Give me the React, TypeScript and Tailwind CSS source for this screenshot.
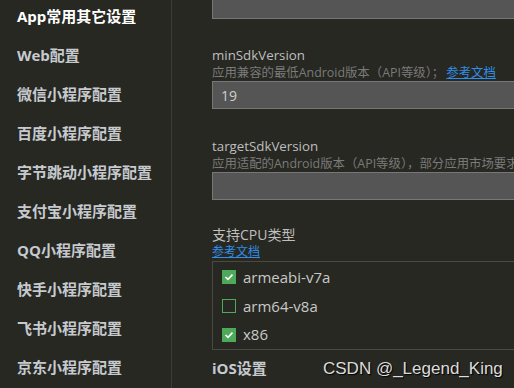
import React from "react";

const cjk = '"Segoe UI", "Open Sans", "Noto Sans CJK SC", sans-serif';

const items = [
  "App常用其它设置",
  "Web配置",
  "微信小程序配置",
  "百度小程序配置",
  "字节跳动小程序配置",
  "支付宝小程序配置",
  "QQ小程序配置",
  "快手小程序配置",
  "飞书小程序配置",
  "京东小程序配置",
];

function Check({ checked }: { checked: boolean }) {
  return checked ? (
    <div className="w-[14px] h-[14px] bg-[#4ea95a] flex items-center justify-center">
      <svg width="10" height="8" viewBox="0 0 10 8">
        <path d="M1.5 4 L4 6.3 L8.5 1.6" fill="none" stroke="#ffffff" strokeWidth="1.6" />
      </svg>
    </div>
  ) : (
    <div className="w-[14px] h-[14px] border border-[#4ea95a]" />
  );
}

export default function App() {
  return (
    <div
      className="w-[514px] h-[388px] bg-[#272822] flex overflow-hidden relative"
      style={{ fontFamily: cjk }}
    >
      <div className="w-[172px] shrink-0 border-r border-[#3c3c37] flex flex-col -mt-[3px]">
        {items.map((t, i) => (
          <div
            key={t}
            className={`h-[39px] shrink-0 flex items-center pl-[17px] text-[15px] font-bold ${
              i === 0 ? "text-white" : "text-[#c6cacf]"
            }`}
          >
            {t}
          </div>
        ))}
      </div>
      <div className="flex-1 overflow-hidden pl-[40px] flex flex-col">
        <div className="w-[330px] h-[29px] -mt-[10px] shrink-0 bg-[#555555] border border-[#777777]" />
        <div className="mt-[26px] h-[20px] leading-[20px] text-[13.3px] text-[#bfbfbf] whitespace-nowrap">
          minSdkVersion
        </div>
        <div className="h-[16px] leading-[16px] text-[12.4px] text-[#7a7a7a] whitespace-nowrap">
          应用兼容的最低Android版本（API等级）；
          <span className="ml-[2px] text-[#2f8ee8] underline">参考文档</span>
        </div>
        <div className="w-[330px] h-[28px] shrink-0 bg-[#555555] border border-[#777777] flex items-center pl-[8px] text-[14px] text-[#cfcfcf]">
          19
        </div>
        <div className="mt-[27px] h-[20px] leading-[20px] text-[13.3px] text-[#bfbfbf] whitespace-nowrap">
          targetSdkVersion
        </div>
        <div className="h-[16px] leading-[16px] text-[12.4px] text-[#7a7a7a] whitespace-nowrap">
          应用适配的Android版本（API等级），部分应用市场要求设置为较高的版本
        </div>
        <div className="w-[330px] h-[28px] shrink-0 bg-[#555555] border border-[#777777]" />
        <div className="mt-[26px] h-[18px] leading-[18px] text-[14px] text-[#bfbfbf] whitespace-nowrap">
          支持CPU类型
        </div>
        <div className="h-[17px] leading-[16px] text-[12px] text-[#2f8ee8] underline whitespace-nowrap">
          参考文档
        </div>
        <div className="w-[330px] h-[89px] shrink-0 border border-[#4a4a45] pt-[1px] flex flex-col">
          {[
            ["armeabi-v7a", true],
            ["arm64-v8a", false],
            ["x86", true],
          ].map(([label, c]) => (
            <div key={label as string} className="h-[29px] flex items-center pl-[9px] gap-[7px]">
              <Check checked={c as boolean} />
              <span className="text-[15px] text-[#c8c8c8]">{label as string}</span>
            </div>
          ))}
        </div>
        <div className="mt-[8px] h-[20px] leading-[20px] text-[15px] font-bold text-[#c6cacf] whitespace-nowrap">
          iOS设置
        </div>
      </div>
      <div
        className="absolute left-[323px] top-[357px] text-[17px] text-[#dcdcdc] whitespace-nowrap leading-[24px]"
        style={{ fontFamily: '"Liberation Sans", Arial, sans-serif', textShadow: "1px 1px 1px #000" }}
      >
        CSDN @_Legend_King
      </div>
    </div>
  );
}
